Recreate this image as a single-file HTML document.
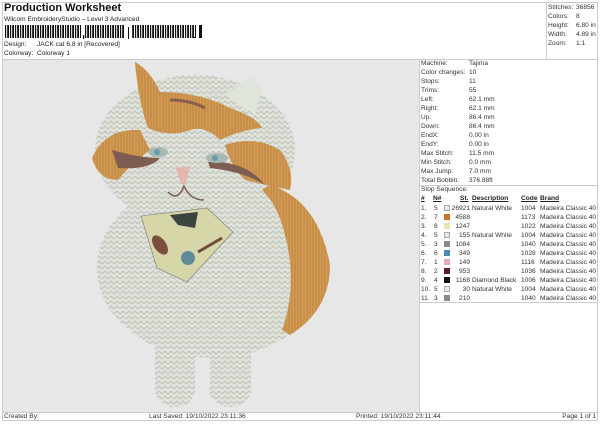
<!DOCTYPE html>
<html><head><style>
*{margin:0;padding:0;box-sizing:border-box}
body{width:600px;height:424px;background:#fff;font-family:"Liberation Sans",sans-serif;color:#222;position:relative;overflow:hidden;font-size:6.6px}
.a{position:absolute;white-space:nowrap}
.l{position:absolute;background:#ccc}
</style></head><body>
<div class="l" style="left:2px;top:2px;width:596px;height:1px"></div>
<div class="l" style="left:2px;top:2px;width:1px;height:419px"></div>
<div class="l" style="left:597px;top:2px;width:1px;height:419px"></div>
<div class="l" style="left:2px;top:420px;width:596px;height:1px"></div>
<div class="a" style="left:4px;top:2px;font-size:11px;font-weight:bold;color:#111">Production Worksheet</div>
<div class="a" style="left:4px;top:16px">Wilcom EmbroideryStudio – Level 3 Advanced</div>
<svg class="a" style="left:5px;top:25px" width="200" height="14">
<defs><pattern id="b" width="5" height="13" patternUnits="userSpaceOnUse"><rect width="1.2" height="13" fill="#111"/><rect x="2.2" width="1.8" height="13" fill="#111"/></pattern></defs>
<g fill="#111">
<rect x="0" y="0" width="76" height="13" fill="url(#b)"/>
<rect x="80" y="0" width="40" height="13" fill="url(#b)"/>
<rect x="127" y="0" width="62" height="13" fill="url(#b)"/>
<rect x="78" y="10" width="1.2" height="4"/>
<rect x="123" y="2" width="1" height="13"/><rect x="123" y="14" width="2.5" height="1"/>
<rect x="190" y="0" width="1" height="13"/><rect x="188" y="12" width="2.5" height="1"/>
<rect x="194" y="0" width="3" height="13"/>
</g>
</svg>
<div class="a" style="left:4px;top:41px">Design:</div><div class="a" style="left:37px;top:41px">JACK cat 6,8 in [Recovered]</div>
<div class="a" style="left:4px;top:50px">Colorway:</div><div class="a" style="left:37px;top:50px">Colorway 1</div>
<div class="l" style="left:546px;top:2px;width:1px;height:57px"></div>
<div class="a" style="left:548px;top:3px;line-height:9px;color:#333">Stitches:<br>Colors:<br>Height:<br>Width:<br>Zoom:</div>
<div class="a" style="left:576px;top:3px;line-height:9px;color:#333">36856<br>8<br>6.80 in<br>4.89 in<br>1:1</div>
<div class="l" style="left:2px;top:59px;width:596px;height:1px"></div>
<div class="a" style="left:3px;top:60px;width:416px;height:352px;background:#e7e7e7"></div>
<svg class="a" style="left:3px;top:60px" width="416" height="352" viewBox="3 60 416 352">
<defs><pattern id="t" width="6" height="5" patternUnits="userSpaceOnUse"><rect width="6" height="5" fill="#dfe3db"/><path d="M0 4 L3 1 L6 4" stroke="#b9bdb4" stroke-width=".9" fill="none"/></pattern>
<pattern id="o" width="3" height="6" patternUnits="userSpaceOnUse"><rect width="3" height="6" fill="#d29a52"/><path d="M1 0 L1 6" stroke="#b37a3a" stroke-width=".7"/></pattern></defs>
<ellipse cx="175" cy="390" rx="20" ry="17" fill="url(#t)"/>
<ellipse cx="230" cy="390" rx="21" ry="17" fill="url(#t)"/>
<rect x="155" y="340" width="40" height="52" fill="url(#t)"/>
<rect x="210" y="340" width="41" height="52" fill="url(#t)"/>
<ellipse cx="212" cy="268" rx="115" ry="90" fill="url(#t)"/>
<ellipse cx="195" cy="150" rx="100" ry="75" fill="url(#t)"/>
<path d="M225 95 L250 77 L262 88 L255 115 Z" fill="#e0e5dc"/>
<path d="M135 62 Q150 70 160 92 Q200 92 230 108 Q258 118 262 128 Q240 130 220 140 Q205 125 190 130 Q170 138 148 128 Q138 100 135 62 Z" fill="url(#o)"/>
<path d="M92 158 Q105 128 140 130 L150 150 Q130 165 118 180 Q98 180 92 158 Z" fill="url(#o)"/>
<path d="M225 145 Q255 135 280 150 Q295 170 290 190 Q265 185 245 180 Q230 165 225 145 Z" fill="url(#o)"/>
<path d="M270 185 Q318 200 330 265 Q330 310 290 335 L282 330 Q298 285 285 235 Q278 205 262 190 Z" fill="url(#o)"/>
<path d="M112 150 Q140 158 160 158 Q150 170 118 168 Z" fill="#7d5c52"/>
<path d="M208 162 Q245 160 265 185 Q245 172 210 168 Z" fill="#7d5c52"/>
<path d="M170 100 Q190 100 205 108" stroke="#8a5e4e" stroke-width="3" fill="none"/>
<ellipse cx="158" cy="152" rx="10" ry="5" fill="#a7b8b4"/><circle cx="157" cy="152" r="3" fill="#6b9aa8"/>
<ellipse cx="217" cy="158" rx="11" ry="5" fill="#a7b8b4"/><circle cx="215" cy="158" r="3" fill="#6b9aa8"/>
<path d="M176 168 L190 166 L186 184 L181 184 Z" fill="#e4b6ae"/>
<path d="M168 192 Q178 202 184 186 Q190 200 204 200" stroke="#7b5a52" stroke-width="1.5" fill="none"/>
<path d="M141 216 L207 208 L233 232 L187 282 L157 268 Z" fill="#d7d6a8" stroke="#777" stroke-width=".6"/>
<path d="M170 215 L198 212 L195 228 L178 225 Z" fill="#3c4440"/>
<ellipse cx="160" cy="245" rx="6" ry="11" fill="#7a4e3e" transform="rotate(-35 160 245)"/>
<circle cx="188" cy="258" r="7" fill="#5f8a9a"/>
<path d="M198 252 L222 238" stroke="#6e4c40" stroke-width="3"/>
</svg>
<div class="l" style="left:419px;top:60px;width:1px;height:352px"></div>
<div class="a" style="left:421px;top:59px;line-height:9px;color:#333">Machine:<br>Color changes:<br>Stops:<br>Trims:<br>Left:<br>Right:<br>Up:<br>Down:<br>EndX:<br>EndY:<br>Max Stitch:<br>Min Stitch:<br>Max Jump:<br>Total Bobbin:</div>
<div class="a" style="left:469px;top:59px;line-height:9px;color:#333">Tajima<br>10<br>11<br>55<br>62.1 mm<br>62.1 mm<br>86.4 mm<br>86.4 mm<br>0.00 in<br>0.00 in<br>11.5 mm<br>0.0 mm<br>7.0 mm<br>376.88ft</div>
<div class="l" style="left:419px;top:185px;width:179px;height:1px"></div>
<div class="a" style="left:421px;top:186px;color:#333">Stop Sequence:</div>
<div class="a" style="left:421px;top:195px;font-weight:bold;text-decoration:underline">#</div>
<div class="a" style="left:433px;top:195px;font-weight:bold;text-decoration:underline">N#</div>
<div class="a" style="left:460px;top:195px;font-weight:bold;text-decoration:underline">St.</div>
<div class="a" style="left:472px;top:195px;font-weight:bold;text-decoration:underline">Description</div>
<div class="a" style="left:521px;top:195px;font-weight:bold;text-decoration:underline">Code</div>
<div class="a" style="left:540px;top:195px;font-weight:bold;text-decoration:underline">Brand</div>
<div class="a" style="left:421px;top:204px;line-height:9px;color:#333">1.<br>2.<br>3.<br>4.<br>5.<br>6.<br>7.<br>8.<br>9.<br>10.<br>11.</div>
<div class="a" style="left:434px;top:204px;line-height:9px;color:#333">5<br>7<br>8<br>5<br>3<br>6<br>1<br>2<br>4<br>5<br>3</div>
<div class="a" style="left:444px;top:205px;width:6px">
<div style="height:6px;margin-bottom:3px;background:#e8e8ee;border:1px solid #aaa"></div>
<div style="height:6px;margin-bottom:3px;background:#c8722c"></div>
<div style="height:6px;margin-bottom:3px;background:#efe0b0"></div>
<div style="height:6px;margin-bottom:3px;background:#e8e8ee;border:1px solid #aaa"></div>
<div style="height:6px;margin-bottom:3px;background:#8a8a8a"></div>
<div style="height:6px;margin-bottom:3px;background:#4c88b0"></div>
<div style="height:6px;margin-bottom:3px;background:#e8a8b8"></div>
<div style="height:6px;margin-bottom:3px;background:#5c1c20"></div>
<div style="height:6px;margin-bottom:3px;background:#111"></div>
<div style="height:6px;margin-bottom:3px;background:#e8e8ee;border:1px solid #aaa"></div>
<div style="height:6px;margin-bottom:3px;background:#8a8a8a"></div>
</div>
<div class="a" style="left:450px;top:204px;width:20px;text-align:right;line-height:9px;color:#333">26921<br>4588<br>1247<br>155<br>1084<br>349<br>149<br>953<br>1168<br>30<br>210</div>
<div class="a" style="left:472px;top:204px;line-height:9px;color:#333">Natural White<br><br><br>Natural White<br><br><br><br><br>Diamond Black<br>Natural White<br></div>
<div class="a" style="left:521px;top:204px;line-height:9px;color:#333">1004<br>1173<br>1022<br>1004<br>1040<br>1028<br>1116<br>1036<br>1006<br>1004<br>1040</div>
<div class="a" style="left:540px;top:204px;line-height:9px;color:#333">Madeira Classic 40<br>Madeira Classic 40<br>Madeira Classic 40<br>Madeira Classic 40<br>Madeira Classic 40<br>Madeira Classic 40<br>Madeira Classic 40<br>Madeira Classic 40<br>Madeira Classic 40<br>Madeira Classic 40<br>Madeira Classic 40</div>
<div class="l" style="left:419px;top:302px;width:179px;height:1px"></div>
<div class="l" style="left:2px;top:412px;width:596px;height:1px"></div>
<div class="a" style="left:4px;top:413px;color:#333">Created By:</div>
<div class="a" style="left:149px;top:413px;color:#333">Last Saved: 19/10/2022 23:11:36</div>
<div class="a" style="left:356px;top:413px;color:#333">Printed: 19/10/2022 23:11:44</div>
<div class="a" style="right:4px;top:413px;color:#333">Page 1 of 1</div>
</body></html>
